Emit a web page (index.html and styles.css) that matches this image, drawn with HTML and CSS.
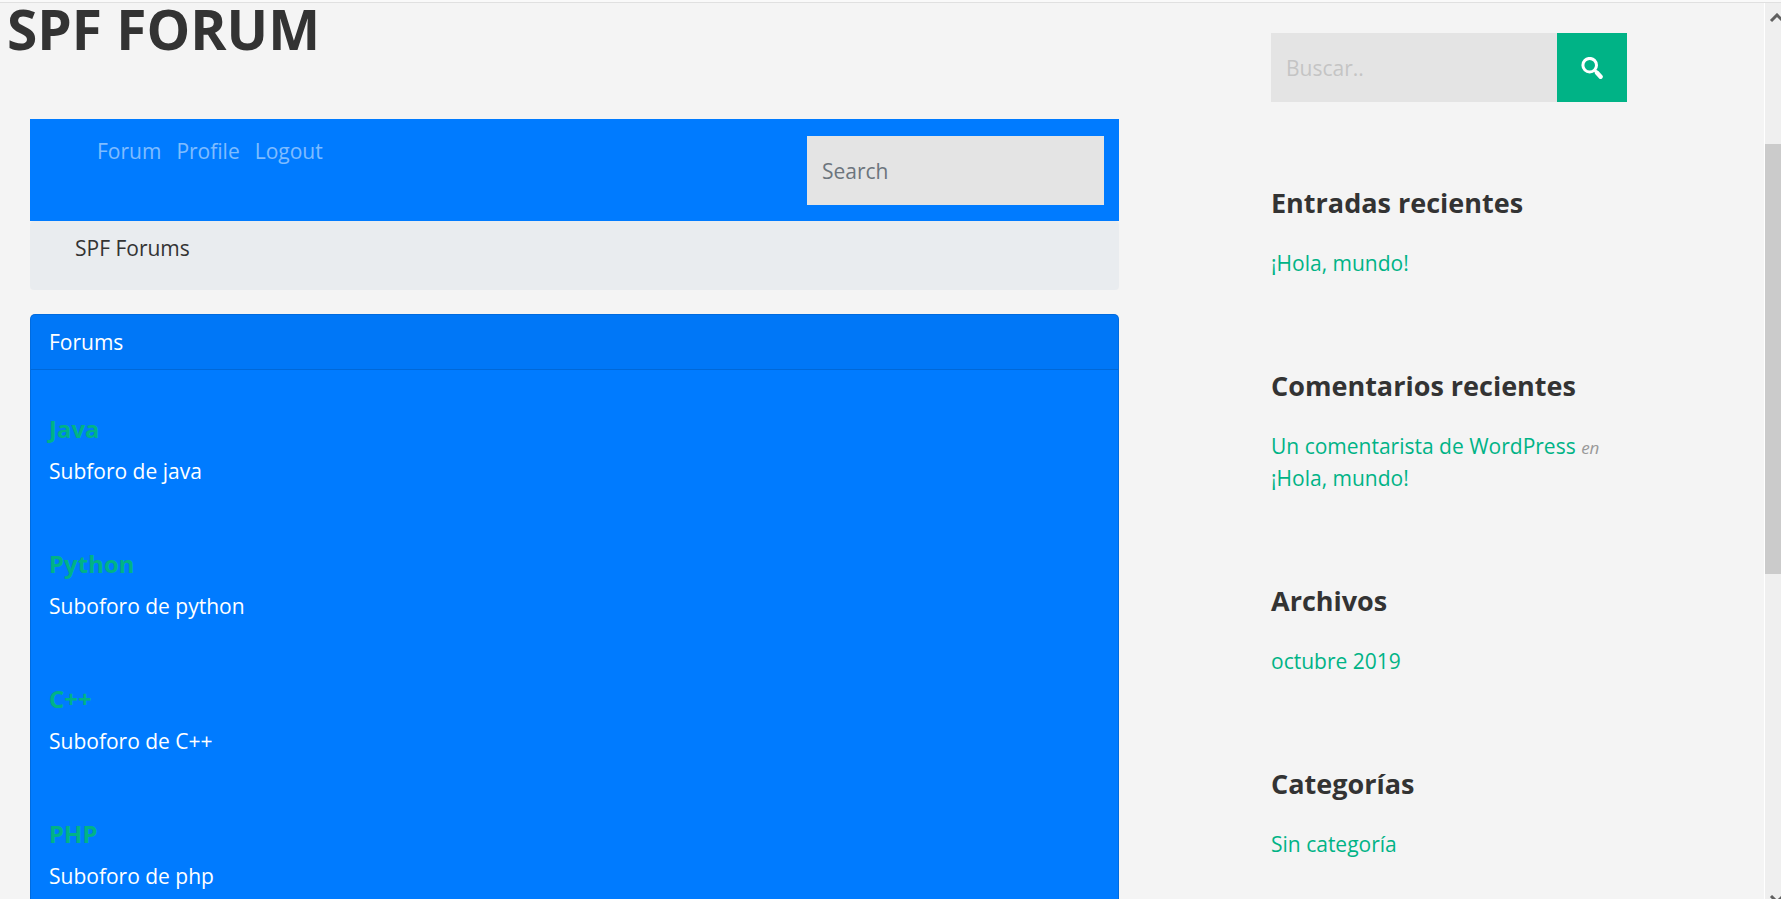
FILE: index.html
```html
<!DOCTYPE html>
<html lang="es">
<head>
<meta charset="utf-8">
<title>SPF Forum</title>
<link rel="stylesheet" href="styles.css">
</head>
<body>
<div class="window">
  <div class="page">
    <main class="main">
      <h1 class="page-title">SPF FORUM</h1>
      <div class="forum">
        <nav class="navbar">
          <div class="nav-links">
            <a href="#">Forum</a>
            <a href="#">Profile</a>
            <a href="#">Logout</a>
          </div>
          <input class="field nav-search" type="search" placeholder="Search" aria-label="Search">
        </nav>
        <div class="breadcrumb">SPF Forums</div>
        <section class="card">
          <header class="card-header">Forums</header>
          <div class="card-body">
            <article class="subforum"><h2><a href="#">Java</a></h2><p>Subforo de java</p></article>
            <article class="subforum"><h2><a href="#">Python</a></h2><p>Suboforo de python</p></article>
            <article class="subforum"><h2><a href="#">C++</a></h2><p>Suboforo de C++</p></article>
            <article class="subforum"><h2><a href="#">PHP</a></h2><p>Suboforo de php</p></article>
          </div>
        </section>
      </div>
    </main>
    <aside class="sidebar">
      <form class="site-search">
        <input class="field" type="search" placeholder="Buscar.." aria-label="Buscar">
        <button type="submit" aria-label="Buscar">
          <svg width="22" height="22" viewBox="0 0 22 22" fill="none" stroke="#fff" stroke-linecap="round">
            <circle cx="8.7" cy="8.2" r="6.8" stroke-width="3"/>
            <path d="M14 13.5l1.5 1.5" stroke-width="3"/>
            <path d="M16 15.8l3.6 4" stroke-width="4.4"/>
          </svg>
        </button>
      </form>
      <section class="widget">
        <h3>Entradas recientes</h3>
        <ul><li><a href="#">¡Hola, mundo!</a></li></ul>
      </section>
      <section class="widget">
        <h3>Comentarios recientes</h3>
        <ul><li><a href="#">Un comentarista de WordPress</a> <em>en</em> <a href="#">¡Hola, mundo!</a></li></ul>
      </section>
      <section class="widget">
        <h3>Archivos</h3>
        <ul><li><a href="#">octubre 2019</a></li></ul>
      </section>
      <section class="widget">
        <h3>Categorías</h3>
        <ul><li><a href="#">Sin categoría</a></li></ul>
      </section>
    </aside>
  </div>
  <div class="scrollbar" aria-hidden="true">
    <svg class="arrow" width="16" height="10" viewBox="0 0 16 10" fill="none" stroke="#606060" stroke-width="3"><path d="M6 8l6-6 6 6"/></svg>
    <div class="thumb"></div>
    <svg class="arrow arrow-down" width="16" height="4" viewBox="0 0 16 4" fill="none" stroke="#606060" stroke-width="3"><path d="M6 1l6 6 6-6"/></svg>
  </div>
</div>
</body>
</html>
```
FILE: styles.css
```css
* { box-sizing: border-box; }

body {
  height: 100vh;
  margin: 0;
  overflow: hidden;
  border-top: 2px solid #f9f9f9;
  background: #f4f4f4;
  color: #333;
  font: 21px/32px "Open Sans", "Noto Sans", sans-serif;
}

h1, h2, h3, p, ul { margin: 0; padding: 0; }
ul { list-style: none; }
a { color: #00b386; text-decoration: none; }

.window {
  display: flex;
  height: 100%;
  overflow: hidden;
  border-top: 1px solid #e0e0e0;
}

.page {
  flex: 1;
  display: flex;
  min-width: 0;
  padding-right: 137px;
}

.main { flex: 1; min-width: 0; }

.page-title {
  padding-left: 7px;
  font-size: 55px;
  line-height: 52px;
  font-weight: 700;
}

.forum { margin: 64px 152px 0 30px; }

.navbar {
  display: flex;
  justify-content: space-between;
  align-items: flex-end;
  padding: 16px 15px 16px 67px;
  background: #007bff;
}

.nav-links {
  display: flex;
  align-self: flex-start;
  gap: 15px;
  padding-bottom: 38px;
}
.nav-links a { color: rgba(255, 255, 255, .5); }

.field {
  min-width: 0;
  height: 69px;
  padding: 0 15px;
  border: 0;
  border-radius: 0;
  outline: 0;
  appearance: none;
  background: #e4e4e4;
  color: #333;
  font: inherit;
}

.nav-search { width: 297px; }
.nav-search::placeholder { color: #6c757d; opacity: 1; }

.breadcrumb {
  padding: 11px 45px 26px;
  border-radius: 4px;
  background: #e9ecef;
}

.card {
  margin-top: 24px;
  border: 1px solid rgba(0, 0, 0, .125);
  border-radius: 5px;
  background: #007bff;
  color: #fff;
}

.card-header {
  padding: 11px 18px;
  border-bottom: 1px solid rgba(0, 0, 0, .125);
  background: rgba(0, 0, 0, .03);
}

.card-body { padding: 24px 18px; }
.subforum { padding: 19px 0 42px; }
.subforum h2 {
  margin-bottom: 10px;
  font-size: 24px;
  line-height: 32px;
  font-weight: 700;
}

.sidebar { width: 356px; padding-top: 30px; }

.site-search { display: flex; margin-bottom: 83px; }
.site-search .field { flex: 1; }
.site-search .field::placeholder { color: #c4c4c4; opacity: 1; }
.site-search button {
  display: grid;
  place-items: center;
  width: 70px;
  padding: 0;
  border: 0;
  background: #00b386;
}

.widget { margin-bottom: 89px; }
.widget h3 {
  margin-bottom: 26px;
  font-size: 27px;
  line-height: 36px;
  font-weight: 700;
}
.widget em { color: #999; font-size: 17px; line-height: 1; }

.scrollbar {
  display: flex;
  flex-direction: column;
  width: 17px;
  border-left: 1px solid #fff;
  background: #efefef;
}
.arrow { margin-top: 10px; }
.thumb { flex: 0 0 48%; margin-top: 121px; background: #cbcbcb; }
.arrow-down { margin-top: auto; }
```
